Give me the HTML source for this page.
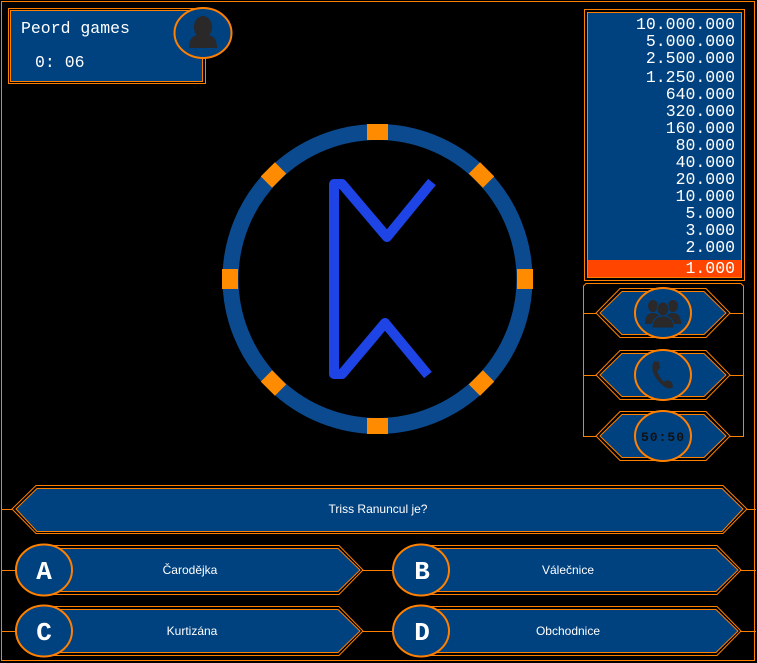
<!DOCTYPE html>
<html><head><meta charset="utf-8"><style>
html,body{margin:0;padding:0;background:#000;width:757px;height:663px;overflow:hidden}
svg{display:block}
.m{font-family:"Liberation Mono",monospace;fill:#fff}
.s{font-family:"Liberation Sans",sans-serif;fill:#fff;font-size:12px}
</style></head><body>
<svg width="757" height="663" viewBox="0 0 757 663" xmlns="http://www.w3.org/2000/svg">
<rect x="1.5" y="1.5" width="753" height="659" fill="none" stroke="#ff8000"/>
<!-- player box -->
<rect x="8.5" y="8.5" width="197" height="75" fill="none" stroke="#ff8000"/>
<rect x="10.5" y="10.5" width="192" height="71" fill="#00417f" stroke="#ff8000"/>
<text x="21" y="33" class="m" font-size="16.5">Peord games</text>
<text x="35" y="67" class="m" font-size="16.5">0: 06</text>
<ellipse cx="203" cy="33" rx="28.5" ry="25" fill="#00417f" stroke="#ff8000" stroke-width="2"/>
<ellipse cx="203" cy="27" rx="9" ry="11" fill="#2a2828"/>
<path d="M189 48 Q189 36 198 35 L208 35 Q217 36 217 48 Z" fill="#2a2828"/>
<!-- money ladder -->
<rect x="584.5" y="9.5" width="160" height="271" fill="none" stroke="#ff8000"/>
<rect x="587.5" y="12.5" width="154" height="265" fill="#00417f" stroke="#ff8000"/>
<rect x="588" y="260" width="153" height="17" fill="#ff4500"/>
<g class="m" font-size="16.5" text-anchor="end">
<text x="735" y="29">10.000.000</text>
<text x="735" y="46">5.000.000</text>
<text x="735" y="63">2.500.000</text>
<text x="735" y="82">1.250.000</text>
<text x="735" y="99">640.000</text>
<text x="735" y="116">320.000</text>
<text x="735" y="133">160.000</text>
<text x="735" y="150">80.000</text>
<text x="735" y="167">40.000</text>
<text x="735" y="184">20.000</text>
<text x="735" y="201">10.000</text>
<text x="735" y="218">5.000</text>
<text x="735" y="235">3.000</text>
<text x="735" y="252">2.000</text>
<text x="735" y="273">1.000</text>
</g>
<!-- lifelines -->
<path d="M583.5 436 V286 L586 283.5 H741 L743.5 286 V436" fill="none" stroke="#ff8000"/>
<g id="ll">
<path d="M583 313.5 H596 M730 313.5 H744" stroke="#ff8000"/>
<polygon points="596,313 620,288.5 706,288.5 730,313 706,337.5 620,337.5" fill="none" stroke="#ff8000"/>
<polygon points="600,313 622,291.5 704,291.5 726,313 704,334.5 622,334.5" fill="#00417f" stroke="#ff8000"/>
</g>
<use href="#ll" y="62"/>
<use href="#ll" y="123"/>
<ellipse cx="663" cy="313" rx="28" ry="25" fill="#00417f" stroke="#ff8000" stroke-width="2"/>
<ellipse cx="663" cy="375" rx="28" ry="25" fill="#00417f" stroke="#ff8000" stroke-width="2"/>
<ellipse cx="663" cy="436" rx="28" ry="25" fill="#00417f" stroke="#ff8000" stroke-width="2"/>
<!-- audience -->
<g fill="#2a2828">
<ellipse cx="653" cy="306" rx="5" ry="6"/><ellipse cx="673" cy="306" rx="5" ry="6"/>
<path d="M645 324 Q645 313 653 313 Q661 313 661 324Z"/><path d="M665 324 Q665 313 673 313 Q681 313 681 324Z"/>
<ellipse cx="663" cy="309" rx="6" ry="7" stroke="#00417f"/>
<path d="M652 328 Q652 316 663 316 Q674 316 674 328Z" stroke="#00417f"/>
</g>
<!-- phone -->
<path d="M655 361 Q651 364 653 372 Q657 382 665 387 Q670 390 673 387 L672 382 L667 380 L664 382 Q659 377 657 371 L660 368 L659 362 Z" fill="#2a2828"/>
<text x="663" y="441" class="m" font-size="13" font-weight="bold" text-anchor="middle" style="fill:#111" letter-spacing="1">50:50</text>
<!-- logo -->
<circle cx="377.5" cy="279" r="147" fill="none" stroke="#0b4a8e" stroke-width="16"/>
<g fill="#ff8c00">
<rect x="367" y="124" width="21" height="16"/>
<rect x="367" y="418" width="21" height="16"/>
<rect x="222" y="269" width="16" height="20"/>
<rect x="517" y="269" width="16" height="20"/>
<rect x="-10" y="-8" width="20" height="16" transform="translate(273.5,175) rotate(-45)"/>
<rect x="-10" y="-8" width="20" height="16" transform="translate(481.5,175) rotate(45)"/>
<rect x="-10" y="-8" width="20" height="16" transform="translate(273.5,383) rotate(45)"/>
<rect x="-10" y="-8" width="20" height="16" transform="translate(481.5,383) rotate(-45)"/>
</g>
<path d="M432 182 L387 237 L342 184 L334 184 L334 374 L342 374 L385 323 L428 375" fill="none" stroke="#1e44e6" stroke-width="10" stroke-linejoin="round"/>
<!-- question -->
<path d="M1 509.5 H12 M747 509.5 H756" stroke="#ff8000"/>
<polygon points="12,509 36,485.5 723,485.5 747,509 723,533.5 36,533.5" fill="none" stroke="#ff8000"/>
<polygon points="16,509 37,488.5 722,488.5 743,509 722,531.5 37,531.5" fill="#00417f" stroke="#ff8000"/>
<text x="378" y="513" class="s" text-anchor="middle">Triss Ranuncul je?</text>
<!-- answers -->
<g id="ans">
<path d="M1 570.5 H16 M362 570.5 H392" stroke="#ff8000"/>
<polygon points="50,545.5 339,545.5 363,570 339,594.5 50,594.5" fill="none" stroke="#ff8000"/>
<polygon points="50,548.5 338,548.5 360,570 338,591.5 50,591.5" fill="#00417f" stroke="#ff8000"/>
</g>
<g transform="translate(378,0)">
<path d="M362 570.5 H378" stroke="#ff8000"/>
<polygon points="50,545.5 339,545.5 363,570 339,594.5 50,594.5" fill="none" stroke="#ff8000"/>
<polygon points="50,548.5 338,548.5 360,570 338,591.5 50,591.5" fill="#00417f" stroke="#ff8000"/>
</g>
<use href="#ans" y="61"/>
<g transform="translate(378,61)">
<path d="M362 570.5 H378" stroke="#ff8000"/>
<polygon points="50,545.5 339,545.5 363,570 339,594.5 50,594.5" fill="none" stroke="#ff8000"/>
<polygon points="50,548.5 338,548.5 360,570 338,591.5 50,591.5" fill="#00417f" stroke="#ff8000"/>
</g>
<g fill="#00417f" stroke="#ff8000" stroke-width="2">
<ellipse cx="44" cy="570" rx="28" ry="25.5"/>
<ellipse cx="421" cy="570" rx="28" ry="25.5"/>
<ellipse cx="44" cy="631" rx="28" ry="25.5"/>
<ellipse cx="421" cy="631" rx="28" ry="25.5"/>
</g>
<g class="m" font-size="26" font-weight="bold" text-anchor="middle">
<text x="44" y="579">A</text><text x="422" y="579">B</text>
<text x="44" y="640">C</text><text x="422" y="640">D</text>
</g>
<g class="s" text-anchor="middle">
<text x="190" y="574">Čarodějka</text>
<text x="568" y="574">Válečnice</text>
<text x="192" y="635">Kurtizána</text>
<text x="568" y="635">Obchodnice</text>
</g>
</svg>
</body></html>
